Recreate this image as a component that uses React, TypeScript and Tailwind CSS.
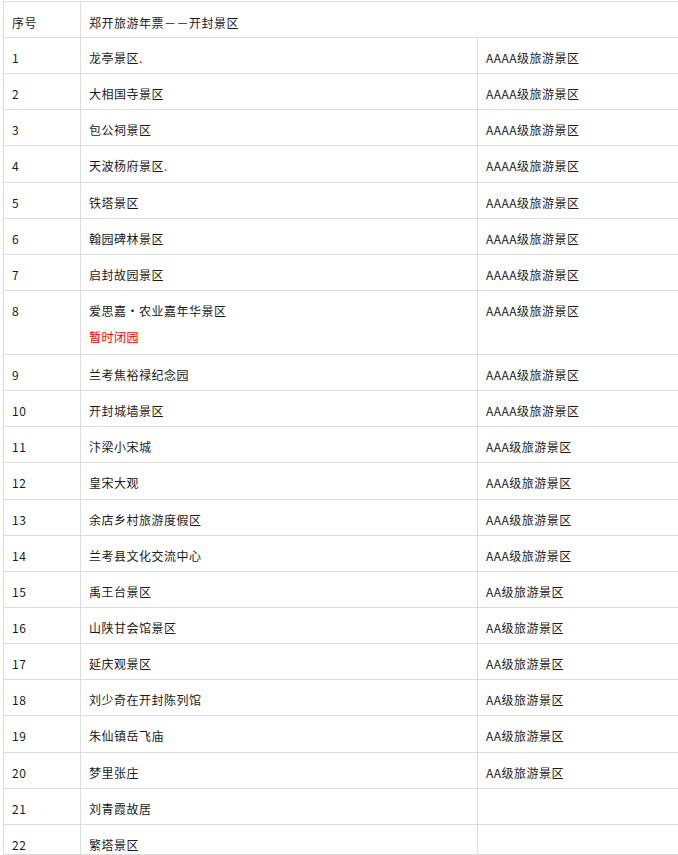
import React from "react";

type Row = { n: string; name: string; level: string; dot?: boolean; note?: string };

const rows: Row[] = [
  { n: "1", name: "龙亭景区", level: "AAAA级旅游景区", dot: true },
  { n: "2", name: "大相国寺景区", level: "AAAA级旅游景区" },
  { n: "3", name: "包公祠景区", level: "AAAA级旅游景区" },
  { n: "4", name: "天波杨府景区", level: "AAAA级旅游景区", dot: true },
  { n: "5", name: "铁塔景区", level: "AAAA级旅游景区" },
  { n: "6", name: "翰园碑林景区", level: "AAAA级旅游景区" },
  { n: "7", name: "启封故园景区", level: "AAAA级旅游景区" },
  { n: "8", name: "爱思嘉·农业嘉年华景区", level: "AAAA级旅游景区", note: "暂时闭园" },
  { n: "9", name: "兰考焦裕禄纪念园", level: "AAAA级旅游景区" },
  { n: "10", name: "开封城墙景区", level: "AAAA级旅游景区" },
  { n: "11", name: "汴梁小宋城", level: "AAA级旅游景区" },
  { n: "12", name: "皇宋大观", level: "AAA级旅游景区" },
  { n: "13", name: "余店乡村旅游度假区", level: "AAA级旅游景区" },
  { n: "14", name: "兰考县文化交流中心", level: "AAA级旅游景区" },
  { n: "15", name: "禹王台景区", level: "AA级旅游景区" },
  { n: "16", name: "山陕甘会馆景区", level: "AA级旅游景区" },
  { n: "17", name: "延庆观景区", level: "AA级旅游景区" },
  { n: "18", name: "刘少奇在开封陈列馆", level: "AA级旅游景区" },
  { n: "19", name: "朱仙镇岳飞庙", level: "AA级旅游景区" },
  { n: "20", name: "梦里张庄", level: "AA级旅游景区" },
  { n: "21", name: "刘青霞故居", level: "" },
  { n: "22", name: "繁塔景区", level: "" },
];

const cell = "border-r border-b border-[#dddddd] pl-[8px] pt-[7px] leading-[26px] whitespace-nowrap overflow-hidden";

export default function App() {
  return (
    <div
      className="w-[678px] h-[855px] overflow-hidden bg-white pt-[1px] pl-[3px] text-[12px] tracking-[0.5px] text-[#1a1a1a]"
      style={{ fontFamily: '"SimSun", "Noto Sans CJK SC", sans-serif' }}
    >
      <div className="w-[740px] border-t border-l border-[#dddddd]">
        <div className="grid grid-cols-[77px_1fr] h-[36px]">
          <div className={cell + " pt-[8px]"}>序号</div>
          <div className={cell + " pt-[8px]"}>郑开旅游年票－－开封景区</div>
        </div>
        {rows.map((r, i) => {
          const h =
            r.note ? "h-[64px]" : i === rows.length - 1 ? "h-[30px]" : "h-[36.15px]";
          return (
            <div key={r.n} className={"grid grid-cols-[77px_397px_1fr] " + h}>
              <div className={cell}>{r.n}</div>
              <div className={cell}>
                <div>
                  {r.name}
                  {r.dot && <span className="text-[#e0003a]">.</span>}
                </div>
                {r.note && <div className="text-[#ff0000]">{r.note}</div>}
              </div>
              <div className={cell}>{r.level}</div>
            </div>
          );
        })}
      </div>
    </div>
  );
}
